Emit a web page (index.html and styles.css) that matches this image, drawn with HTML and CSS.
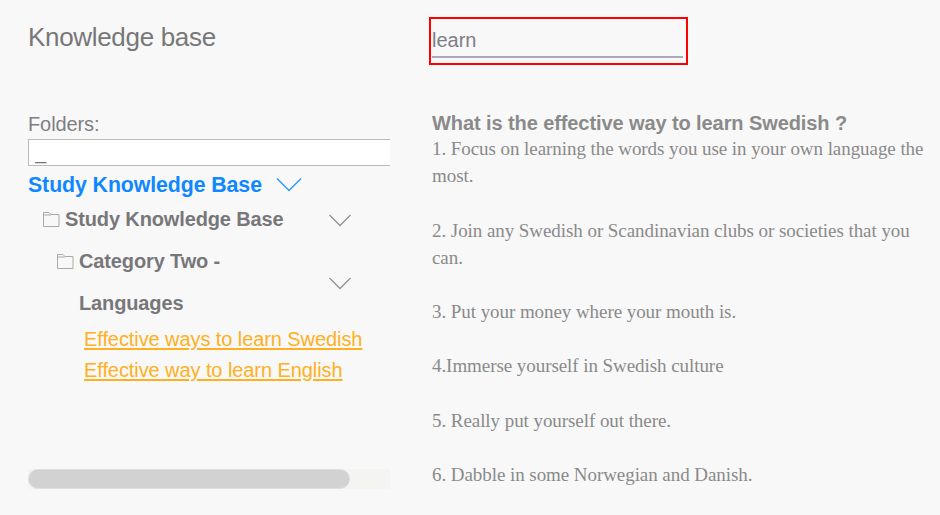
FILE: index.html
```html
<!DOCTYPE html>
<html lang="en">

<head>
    <meta charset="UTF-8">
    <meta name="viewport" content="width=device-width, initial-scale=1.0">
    <link rel="stylesheet" href="styles.css">
    <title>Knowledge base</title>
</head>

<body>
    <div class="page">
        <div class="sidebar">
            <h1 class="title">Knowledge base</h1>
            <label class="folders-label" for="folders">Folders:</label>
            <input class="folders-input" id="folders" type="text" value="_">
            <div class="root">
                <span>Study Knowledge Base</span>
                <svg class="root-arrow" width="26" height="16" viewBox="0 0 26 16">
                    <path d="M1 1.5 L13 13.5 L25 1.5" />
                </svg>
            </div>
            <div class="folder">
                <svg class="folder-icon" width="17" height="16" viewBox="0 0 17 16">
                    <path d="M.5 14.5 V.5 H6 L8 2.5 H16 V14.5 Z M.5 3 H8" />
                </svg>
                <span class="folder-name">Study Knowledge Base</span>
                <svg class="arrow" width="22" height="13" viewBox="0 0 22 13">
                    <path d="M.5 1 L11 11.5 L21.5 1" />
                </svg>
            </div>
            <div class="folder sub-folder">
                <svg class="folder-icon" width="17" height="16" viewBox="0 0 17 16">
                    <path d="M.5 14.5 V.5 H6 L8 2.5 H16 V14.5 Z M.5 3 H8" />
                </svg>
                <span class="folder-name">Category Two -<br>Languages</span>
                <svg class="arrow" width="22" height="13" viewBox="0 0 22 13">
                    <path d="M.5 1 L11 11.5 L21.5 1" />
                </svg>
            </div>
            <div class="links">
                <a href="#">Effective ways to learn Swedish</a>
                <a href="#">Effective way to learn English</a>
            </div>
            <div class="scrollbar">
                <div class="thumb"></div>
            </div>
        </div>
        <div class="content">
            <div class="search">
                <input class="search-input" type="text" value="learn">
            </div>
            <div class="article">
                <h2 class="question">What is the effective way to learn Swedish ?</h2>
                <p>1. Focus on learning the words you use in your own language the<br>most.</p>
                <p>2. Join any Swedish or Scandinavian clubs or societies that you<br>can.</p>
                <p>3. Put your money where your mouth is.</p>
                <p>4.Immerse yourself in Swedish culture</p>
                <p>5. Really put yourself out there.</p>
                <p>6. Dabble in some Norwegian and Danish.</p>
            </div>
        </div>
    </div>
</body>

</html>
```

FILE: styles.css
```css
* {
    padding: 0;
    margin: 0;
    box-sizing: border-box;
}

body {
    background-color: #f8f8f8;
    font-family: "Liberation Sans", Arial, sans-serif;
    color: #77777a;
    overflow: hidden;
}

.page {
    display: flex;
    gap: 39px;
    height: 515px;
    padding: 17px 0 0 28px;
}

.sidebar {
    width: 362px;
    flex-shrink: 0;
}

.title {
    font-size: 26px;
    font-weight: 400;
    line-height: 40px;
    letter-spacing: -0.32px;
    color: #777;
}

.folders-label {
    display: block;
    margin-top: 55px;
    font-size: 20px;
    line-height: 24px;
    letter-spacing: -0.1px;
    color: #807d85;
}

.folders-input {
    display: block;
    width: 100%;
    height: 27px;
    margin-top: 3px;
    padding-left: 6px;
    border: 1px solid #bbb;
    border-width: 1px 0 1px 1px;
    background-color: #fff;
    font-family: inherit;
    font-size: 20px;
    line-height: 23px;
    color: #77777a;
    outline: none;
}

.root {
    display: flex;
    align-items: center;
    gap: 14px;
    height: 32px;
    padding-top: 6px;
    font-size: 21.3px;
    font-weight: 700;
    letter-spacing: -0.08px;
    color: #0f87ff;
}

svg path {
    fill: none;
    stroke: #929292;
    stroke-width: 1.3;
}

.root-arrow path {
    stroke: #2f97ff;
    stroke-width: 1.5;
}

.folder {
    display: flex;
    padding: 0 39px 0 15px;
    font-size: 20px;
    font-weight: 700;
    line-height: 42px;
    letter-spacing: -0.13px;
}

.sub-folder {
    padding-left: 29px;
}

.folder-icon {
    margin: 14px 5px 0 0;
}

.folder-icon path {
    stroke: #aaa;
    stroke-width: 1;
}

.arrow {
    align-self: center;
    margin: 2px 0 0 auto;
}

.links {
    display: flex;
    flex-direction: column;
    align-items: flex-start;
    padding-left: 56px;
}

.links a {
    font-size: 20px;
    line-height: 31px;
    letter-spacing: -0.08px;
    color: #ffb020;
    text-underline-offset: 2px;
}

.scrollbar {
    height: 20px;
    margin-top: 83px;
    background-color: #f4f4f3;
}

.thumb {
    width: 322px;
    height: 20px;
    border-radius: 10px;
    border: 1px solid #dedede;
    background-color: #d2d2d2;
}

.content {
    flex: 1;
}

.search {
    width: 259px;
    height: 48px;
    padding: 8px 3px 0 1px;
    border: 2px solid #f00;
}

.search-input {
    display: block;
    width: 251px;
    height: 31px;
    padding-bottom: 2px;
    border: none;
    border-bottom: 2px solid #aea9ba;
    background: none;
    font-family: inherit;
    font-size: 20px;
    color: #807d88;
    outline: none;
}

.article {
    padding: 45px 0 0 3px;
    color: #8a8a8a;
}

.question {
    font-size: 20px;
    line-height: 26px;
    margin-bottom: -1px;
    letter-spacing: -0.09px;
    white-space: nowrap;
}

.article p {
    margin-bottom: 27.1px;
    font-family: "Liberation Serif", "Times New Roman", serif;
    font-size: 19px;
    line-height: 27.2px;
    letter-spacing: -0.065px;
    white-space: nowrap;
}
```
